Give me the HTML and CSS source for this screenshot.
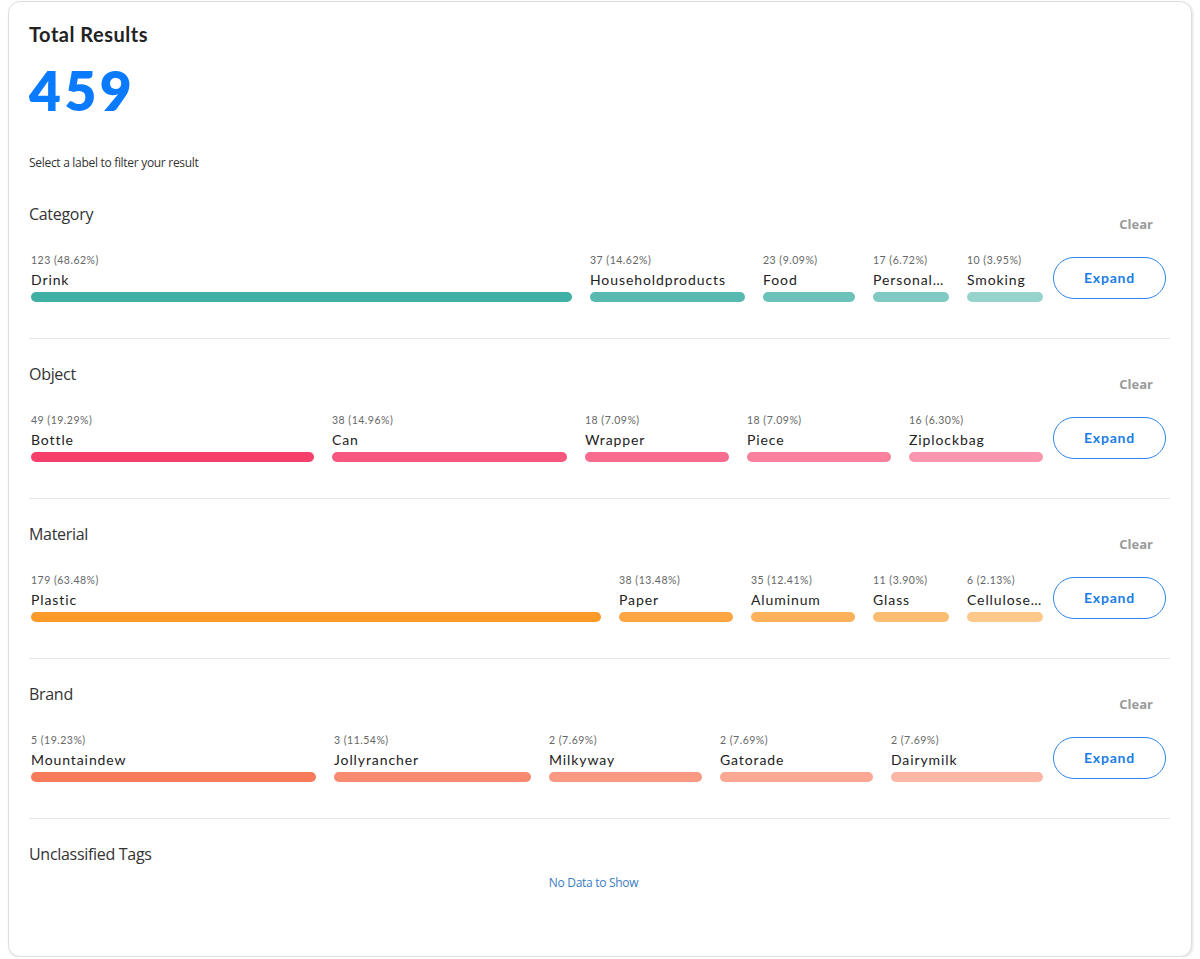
FILE: index.html
```html
<!DOCTYPE html>
<html lang="en">

<head>
    <meta charset="UTF-8" />
    <meta name="viewport" content="width=device-width, initial-scale=1.0" />
    <title>Total Results</title>
    <link rel="stylesheet" href="styles.css">
</head>

<body>
    <div class="card">
        <h2 class="total-title">Total Results</h2>
        <div class="total-num">459</div>
        <p class="hint">Select a label to filter your result</p>

        <!-- Category -->
        <div class="section teal">
            <div class="section-head">
                <h3>Category</h3>
                <span class="clear">Clear</span>
            </div>
            <div class="row">
                <ul class="items">
                    <li style="width: 541px"><span class="count">123 (48.62%)</span><span class="name">Drink</span><i class="bar"></i></li>
                    <li style="width: 155px"><span class="count">37 (14.62%)</span><span class="name">Householdproducts</span><i class="bar"></i></li>
                    <li style="width: 92px"><span class="count">23 (9.09%)</span><span class="name">Food</span><i class="bar"></i></li>
                    <li style="width: 76px"><span class="count">17 (6.72%)</span><span class="name">Personalcare</span><i class="bar"></i></li>
                    <li style="width: 76px"><span class="count">10 (3.95%)</span><span class="name">Smoking</span><i class="bar"></i></li>
                </ul>
                <button class="expand">Expand</button>
            </div>
        </div>

        <!-- Object -->
        <div class="section pink">
            <div class="section-head">
                <h3>Object</h3>
                <span class="clear">Clear</span>
            </div>
            <div class="row">
                <ul class="items">
                    <li style="width: 283px"><span class="count">49 (19.29%)</span><span class="name">Bottle</span><i class="bar"></i></li>
                    <li style="width: 235px"><span class="count">38 (14.96%)</span><span class="name">Can</span><i class="bar"></i></li>
                    <li style="width: 144px"><span class="count">18 (7.09%)</span><span class="name">Wrapper</span><i class="bar"></i></li>
                    <li style="width: 144px"><span class="count">18 (7.09%)</span><span class="name">Piece</span><i class="bar"></i></li>
                    <li style="width: 134px"><span class="count">16 (6.30%)</span><span class="name">Ziplockbag</span><i class="bar"></i></li>
                </ul>
                <button class="expand">Expand</button>
            </div>
        </div>

        <!-- Material -->
        <div class="section orange">
            <div class="section-head">
                <h3>Material</h3>
                <span class="clear">Clear</span>
            </div>
            <div class="row">
                <ul class="items">
                    <li style="width: 570px"><span class="count">179 (63.48%)</span><span class="name">Plastic</span><i class="bar"></i></li>
                    <li style="width: 114px"><span class="count">38 (13.48%)</span><span class="name">Paper</span><i class="bar"></i></li>
                    <li style="width: 104px"><span class="count">35 (12.41%)</span><span class="name">Aluminum</span><i class="bar"></i></li>
                    <li style="width: 76px"><span class="count">11 (3.90%)</span><span class="name">Glass</span><i class="bar"></i></li>
                    <li style="width: 76px"><span class="count">6 (2.13%)</span><span class="name">Cellulosefiber</span><i class="bar"></i></li>
                </ul>
                <button class="expand">Expand</button>
            </div>
        </div>

        <!-- Brand -->
        <div class="section coral">
            <div class="section-head">
                <h3>Brand</h3>
                <span class="clear">Clear</span>
            </div>
            <div class="row">
                <ul class="items">
                    <li style="width: 285px"><span class="count">5 (19.23%)</span><span class="name">Mountaindew</span><i class="bar"></i></li>
                    <li style="width: 197px"><span class="count">3 (11.54%)</span><span class="name">Jollyrancher</span><i class="bar"></i></li>
                    <li style="width: 153px"><span class="count">2 (7.69%)</span><span class="name">Milkyway</span><i class="bar"></i></li>
                    <li style="width: 153px"><span class="count">2 (7.69%)</span><span class="name">Gatorade</span><i class="bar"></i></li>
                    <li style="width: 152px"><span class="count">2 (7.69%)</span><span class="name">Dairymilk</span><i class="bar"></i></li>
                </ul>
                <button class="expand">Expand</button>
            </div>
        </div>

        <!-- 没有分类的标签 -->
        <div class="section last">
            <h3>Unclassified Tags</h3>
            <p class="empty">No Data to Show</p>
        </div>
    </div>
</body>

</html>
```

FILE: styles.css
```css
* {
    margin: 0;
    padding: 0;
    box-sizing: border-box;
}

ul {
    list-style: none;
}

body {
    background: #fff;
    font-family: "Open Sans", "Noto Sans", sans-serif;
    color: #333;
}

.card {
    margin: 1px 8px 0;
    height: 956px;
    padding: 20px 21px 0 20px;
    border: 1px solid #dedede;
    border-radius: 12px;
    box-shadow: 1px 1px 3px rgba(0, 0, 0, 0.12);
    background: #fff;
}

.total-title {
    font: 700 20px/24px Lato, sans-serif;
    color: #222;
    letter-spacing: 0.5px;
}

.total-num {
    margin-top: 14px;
    font: 800 55px/60px Lato, sans-serif;
    color: #0a7bff;
    letter-spacing: 3.5px;
}

.hint {
    margin-top: 35px;
    font-size: 12px;
    line-height: 16px;
    color: #333;
    letter-spacing: -0.3px;
}

.section {
    padding: 24px 0 36px;
    border-bottom: 1px solid #e6e6e6;
}

.hint + .section {
    padding-top: 32px;
}

.section h3 {
    font-weight: 400;
    font-size: 16px;
    line-height: 22px;
    color: #333;
    letter-spacing: -0.3px;
}

.section-head {
    display: flex;
    justify-content: space-between;
    align-items: flex-start;
}

.section-head .clear {
    margin-top: 14px;
    margin-right: 17px;
    font-size: 13px;
    font-weight: 700;
    line-height: 14px;
    color: #9a9a9a;
    cursor: pointer;
}

.row {
    display: flex;
    align-items: center;
    margin-top: 22px;
    padding-left: 2px;
}

.items {
    display: flex;
    gap: 18px;
}

.items li {
    display: flex;
    flex-direction: column;
    flex-shrink: 0;
    cursor: pointer;
}

.items .count {
    font: 400 10.5px/14px Lato, sans-serif;
    color: #666;
    letter-spacing: 0.5px;
    white-space: nowrap;
}

.items .name {
    margin-top: 4px;
    font: 400 14px/18px Lato, sans-serif;
    color: #222;
    letter-spacing: 0.9px;
    white-space: nowrap;
    overflow: hidden;
    text-overflow: ellipsis;
}

.items .bar {
    display: block;
    height: 10px;
    margin-top: 3px;
    border-radius: 5px;
}

.items li:nth-child(2) .bar {
    opacity: 0.88;
}

.items li:nth-child(3) .bar {
    opacity: 0.77;
}

.items li:nth-child(4) .bar {
    opacity: 0.66;
}

.items li:nth-child(5) .bar {
    opacity: 0.55;
}

.teal .bar {
    background: #40afa4;
}

.pink .bar {
    background: #f6406c;
}

.orange .bar {
    background: #fb9a28;
}

.coral .bar {
    background: #f77a5b;
}

.expand {
    width: 113px;
    height: 42px;
    margin-left: 10px;
    border: 1px solid #2f86e8;
    border-radius: 21px;
    background: #fff;
    color: #1a7ee8;
    font: 700 14px Lato, sans-serif;
    letter-spacing: 0.8px;
    cursor: pointer;
}

.section.last {
    border-bottom: none;
}

.empty {
    margin-top: 10px;
    text-align: center;
    font-size: 12px;
    line-height: 16px;
    color: #3a7cc4;
    letter-spacing: -0.3px;
    padding-right: 12px;
}
```
